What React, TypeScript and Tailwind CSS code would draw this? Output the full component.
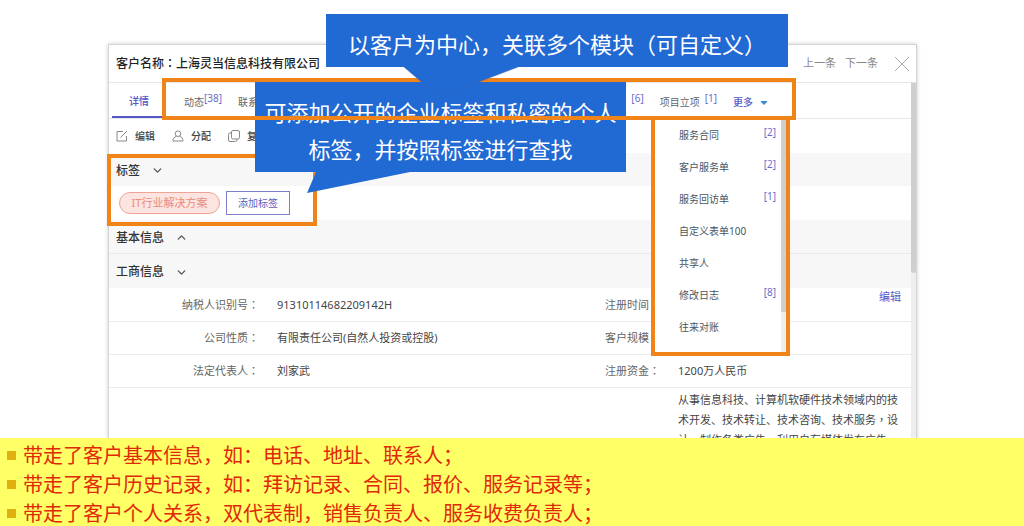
import type { ReactNode } from 'react'
import { ChevronDown, ChevronUp } from 'lucide-react'

type Count = { label: string; count?: number }

const MENU_ITEMS: Count[] = [
  { label: '服务合同', count: 2 },
  { label: '客户服务单', count: 2 },
  { label: '服务回访单', count: 1 },
  { label: '自定义表单100' },
  { label: '共享人' },
  { label: '修改日志', count: 8 },
  { label: '往来对账' }
]

const NOTES = [
  '带走了客户基本信息，如：电话、地址、联系人；',
  '带走了客户历史记录，如：拜访记录、合同、报价、服务记录等；',
  '带走了客户个人关系，双代表制，销售负责人、服务收费负责人；'
]

// punctuation centred in its cell
function Mid({ children }: { children: ReactNode }) {
  return <span className="font-['Noto_Sans_CJK_TC',sans-serif] leading-none">{children}</span>
}

function Sup({ n }: { n: number }) {
  return <span className="text-[10px] leading-4 text-[#6a6cc8]">[{n}]</span>
}

function EditIcon() {
  return (
    <svg viewBox="0 0 12 12" className="size-3" fill="none" stroke="#888" strokeWidth="1">
      <path d="M7 1.5H1v9.5h9.5V6" />
      <path d="M4.5 7.5L10.8 1.2" />
    </svg>
  )
}

function UserIcon() {
  return (
    <svg viewBox="0 0 12 12" className="size-3" fill="none" stroke="#888" strokeWidth="1">
      <circle cx="6" cy="3.7" r="2.8" />
      <path d="M4.3 6.3C2.2 7 1 8.7 1 11h10c0-2.3-1.2-4-3.3-4.7" />
    </svg>
  )
}

function CopyIcon() {
  return (
    <svg viewBox="0 0 12 12" className="size-3" fill="none" stroke="#888" strokeWidth="1">
      <rect x="3.5" y="0.5" width="8" height="8.5" rx="1.5" />
      <path d="M3.5 3H2Q.5 3 .5 4.5V10Q.5 11.5 2 11.5h5.5Q9 11.5 9 10V9" />
    </svg>
  )
}

function ToolButton({ icon, label }: { icon: ReactNode; label: string }) {
  return (
    <button type="button" className="flex items-center gap-[7px] text-[10px] font-medium text-[#444]">
      {icon}
      {label}
    </button>
  )
}

function SectionTitle({ title, open }: { title: string; open?: boolean }) {
  return (
    <button type="button" className="flex h-full w-full items-center gap-[11px] bg-[#f7f7f7] px-[7px] pt-0.5 text-xs font-medium text-[#333]">
      {title}
      {open ? <ChevronUp size={13} strokeWidth={2.5} color="#555" /> : <ChevronDown size={13} strokeWidth={2.5} color="#555" />}
    </button>
  )
}

function MoreMenu() {
  return (
    <div className="absolute right-[6px] top-[36px] z-10 flex h-[237px] w-[139px] border-x-4 border-b-4 border-[#f08418] bg-white">
      <ul className="flex-1">
        {MENU_ITEMS.map(item => (
          <li key={item.label}>
            <button type="button" className="flex h-8 w-full items-center justify-between pl-6 pr-[5px] text-[10px] text-[#4a5560]">
              {item.label}
              {item.count && (
                <span className="pb-1.5">
                  <Sup n={item.count} />
                </span>
              )}
            </button>
          </li>
        ))}
      </ul>
      <div className="w-[5px] bg-[#eee]">
        <div className="h-[193px] bg-[#cfcfcf]" />
      </div>
    </div>
  )
}

function Tabs() {
  return (
    <nav className="flex h-9 border-b border-[#e6e6e6] pl-[3px] text-[10px] text-[#666]">
      <button type="button" className="w-[50px] border-b-2 border-[#5558c8] pt-1 pl-1 font-medium text-[#5558c8]">
        详情
      </button>
      <div className="relative flex w-[634px] items-center pl-[22px] pr-[29px] pt-1">
        <button type="button" className="flex items-center">
          动态
          <span className="pb-2.5">
            <Sup n={38} />
          </span>
        </button>
        <button type="button" className="ml-4">联系人</button>
        <span className="ml-auto pb-2.5">
          <Sup n={6} />
        </span>
        <button type="button" className="ml-4 flex items-center gap-[5px]">
          项目立项
          <span className="pb-2.5">
            <Sup n={1} />
          </span>
        </button>
        <button type="button" className="ml-4 flex items-center gap-2 font-medium text-[#5558c8]">
          更多
          <svg viewBox="0 0 6 4" className="h-1 w-1.5" fill="#3c8bd9">
            <path d="M0 0h6v1L3 4 0 1z" />
          </svg>
        </button>
        <div className="pointer-events-none absolute inset-x-0 -top-[5px] z-20 h-[42px] border-4 border-[#f08418]" />
        <MoreMenu />
      </div>
    </nav>
  )
}

function Label({ children }: { children?: ReactNode }) {
  return (
    <th scope="row" className="p-0 pr-0.5 pt-0.5 text-right font-normal text-[#666]">
      {children}
      {children && <Mid>：</Mid>}
    </th>
  )
}

function InfoTable() {
  return (
    <table className="w-full table-fixed text-[11px] text-[#444]">
      <colgroup>
        <col className="w-[152px]" />
        <col />
        <col className="w-[152px]" />
        <col />
      </colgroup>
      <tbody>
        <tr className="h-[33px] border-b border-[#ececec]">
          <Label>纳税人识别号</Label>
          <td className="p-0 pl-4 pt-0.5">91310114682209142H</td>
          <Label>注册时间</Label>
          <td className="p-0 pr-[10px] text-right align-top leading-[18px]">
            <a href="#edit" className="text-[#5558c8]">编辑</a>
          </td>
        </tr>
        <tr className="h-[33px] border-b border-[#ececec]">
          <Label>公司性质</Label>
          <td className="p-0 pl-4 pt-0.5">有限责任公司(自然人投资或控股)</td>
          <Label>客户规模</Label>
          <td />
        </tr>
        <tr className="h-[33px] border-b border-[#ececec]">
          <Label>法定代表人</Label>
          <td className="p-0 pl-4 pt-0.5">刘家武</td>
          <Label>注册资金</Label>
          <td className="p-0 pl-4 pt-0.5">1200万人民币</td>
        </tr>
        <tr>
          <Label />
          <td />
          <Label />
          <td className="p-0 pl-4 pr-2 pt-0.5 leading-5">
            从事信息科技、计算机软硬件技术领域内的技术开发、技术转让、技术咨询、技术服务<Mid>，</Mid>设计、制作各类广告<Mid>，</Mid>利用自有媒体发布广告<Mid>，</Mid>
          </td>
        </tr>
      </tbody>
    </table>
  )
}

function CustomerPanel() {
  return (
    <section className="ml-[108px] mr-[107px] border border-[#d4d4d4] bg-white shadow-[0_0_4px_rgba(0,0,0,0.2)]">
      <header className="flex h-[38px] items-center border-b border-[#e6e6e6] pl-[7px] pr-[6px]">
        <h1 className="text-xs font-medium text-[#222]">
          客户名称<Mid>：</Mid>上海灵当信息科技有限公司
        </h1>
        <div className="ml-auto flex items-center gap-[9px] text-[11px] text-[#888]">
          <button type="button">上一条</button>
          <button type="button">下一条</button>
          <button type="button" aria-label="关闭" className="ml-[7px]">
            <svg viewBox="0 0 16 16" className="size-4" stroke="#aaa" strokeWidth="1">
              <path d="M1 1l14 14M15 1L1 15" />
            </svg>
          </button>
        </div>
      </header>

      <div className="flex">
        <div className="min-w-0 flex-1">
          <Tabs />
          <div className="flex h-[34px] items-center gap-[17px] pl-[7px]">
            <ToolButton icon={<EditIcon />} label="编辑" />
            <ToolButton icon={<UserIcon />} label="分配" />
            <ToolButton icon={<CopyIcon />} label="复制" />
          </div>

          <div className="relative">
            <div className="h-[33px]">
              <SectionTitle title="标签" />
            </div>
            <div className="flex h-[34px] items-center gap-1.5 pl-[10px]">
              <span className="flex h-[22px] w-[101px] items-center justify-center rounded-full border border-[#eea396] bg-[#fce4e0] text-[11px] text-[#e98d7e]">
                IT行业解决方案
              </span>
              <button type="button" className="h-6 w-16 border border-[#7c7ec8] bg-white text-[10px] text-[#5f61c2]">
                添加标签
              </button>
            </div>
            <div className="pointer-events-none absolute -left-0.5 top-px h-[72px] w-[210px] border-4 border-[#f08418]" />
          </div>

          <div className="h-[34px] border-b border-[#e9e9e9]">
            <SectionTitle title="基本信息" open />
          </div>
          <div className="h-[34px]">
            <SectionTitle title="工商信息" />
          </div>
          <InfoTable />
        </div>
        <div className="w-[5px] bg-[#eee]">
          <div className="h-[190px] rounded-b bg-[#cfcfcf]" />
        </div>
      </div>
    </section>
  )
}

export default function App() {
  return (
    <div className="flex h-screen flex-col overflow-hidden bg-white font-['Noto_Sans','Noto_Sans_CJK_SC',sans-serif]">
      <main className="relative min-h-0 flex-1 overflow-hidden pt-11">
        <CustomerPanel />

        <div className="absolute left-[255px] top-[82px] z-10 w-[371px] bg-[#2169d3] pb-1 pt-3 text-center text-[22px] leading-[37px] text-white">
          <p>可添加公开的企业标签和私密的个人</p>
          <p>标签，并按照标签进行查找</p>
          <svg viewBox="0 0 103 21" className="absolute left-[52px] top-full h-[21px] w-[103px]" fill="#2169d3">
            <path d="M9 0h94L0 21z" />
          </svg>
        </div>

        <div className="absolute left-[326px] top-[14px] z-30 w-[462px] bg-[#2169d3] pb-1 pt-3 text-center text-[22px] leading-[37px] text-white">
          <p>以客户为中心，关联多个模块（可自定义）</p>
          <svg viewBox="0 0 114 30" className="absolute left-[78px] top-full h-[30px] w-[114px]" fill="#2169d3">
            <path d="M0 0h114L35 30z" />
            <path d="M0 0l35 30L114 0" fill="none" stroke="#3a6bb8" strokeWidth="0.5" />
          </svg>
        </div>
      </main>

      <footer className="h-[88px] shrink-0 overflow-hidden bg-[#ffff66] pl-[7px] pt-[3px]">
        <ul>
          {NOTES.map(note => (
            <li key={note} className="flex items-center gap-[7px] text-xl leading-[29px] text-[#e02808]">
              <span className="size-[9px] bg-[#e0b010]" />
              {note}
            </li>
          ))}
        </ul>
      </footer>
    </div>
  )
}
